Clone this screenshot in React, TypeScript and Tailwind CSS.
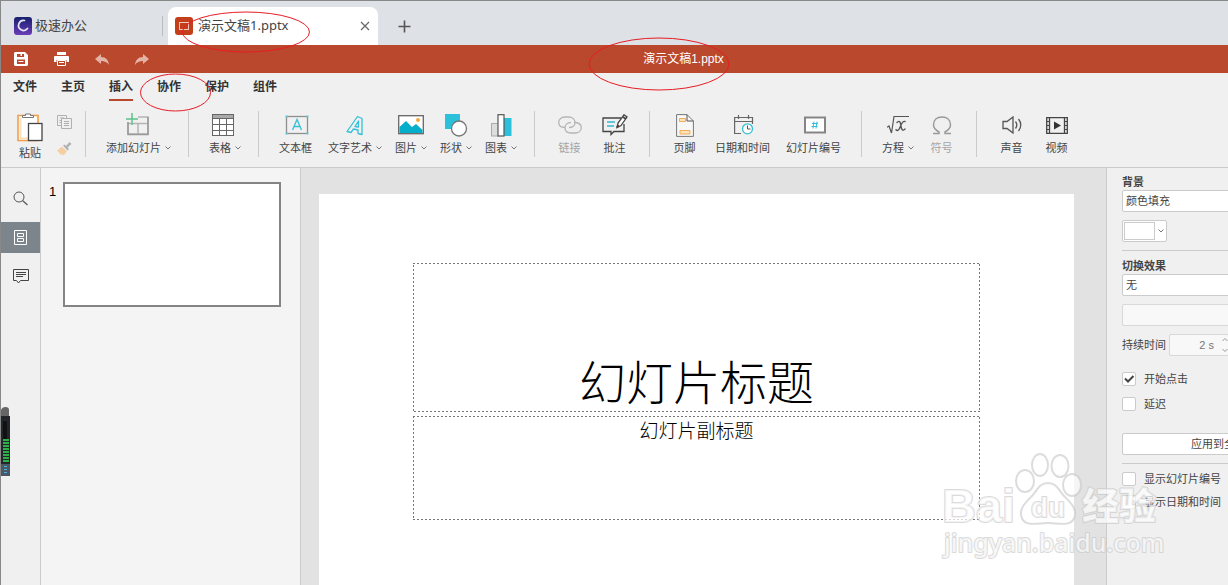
import { useState } from 'react';
import type { ReactNode } from 'react';

const menuTabs = ['文件', '主页', '插入', '协作', '保护', '组件'];

function Chevron() {
  return (
    <svg width="6" height="4" viewBox="0 0 6 4" fill="none" stroke="#777">
      <path d="M0.5 0.5L3 3L5.5 0.5" />
    </svg>
  );
}

function Tool({ label, menu, disabled, children }: { label: string; menu?: boolean; disabled?: boolean; children: ReactNode }) {
  return (
    <button disabled={disabled} className={`flex flex-col items-center shrink-0 ${menu ? 'pl-2 pr-[5px]' : 'px-2 min-w-[45px]'}`}>
      <span className="h-7 flex items-center">{children}</span>
      <span className={`h-[18px] flex items-center gap-1 text-[11px] whitespace-nowrap ${disabled ? 'text-[#a5a5a5]' : 'text-[#444]'}`}>
        {label}
        {menu && <Chevron />}
      </span>
    </button>
  );
}

function Group({ children }: { children: ReactNode }) {
  return <div className="flex shrink-0 h-[46px] px-3 border-l border-[#cbcbcb]">{children}</div>;
}

function Toolbar() {
  return (
    <div className="h-[65px] pt-[9px] flex items-start overflow-hidden">
      <div className="flex gap-3.5 pl-4 pr-3 shrink-0">
        <button className="flex flex-col items-center gap-0.5 pt-0.5 w-[26px]">
          <svg width="26" height="30" viewBox="0 0 26 30" fill="none">
            <rect x="1" y="2.5" width="20" height="25" fill="#fff" stroke="#f0a04b" strokeWidth="1.6" />
            <path d="M3.5 5v20.5h8" stroke="#fce0bd" strokeWidth="2" />
            <path d="M5.5 4.5v-2h3v-1.500h5v1.500h3v2z" fill="#fff" stroke="#777" />
            <rect x="11.500" y="10.500" width="13.500" height="17" fill="#fff" stroke="#444" strokeWidth="1.300" />
          </svg>
          <span className="h-[16px] flex items-center text-[11px] text-[#444] whitespace-nowrap">粘贴</span>
        </button>
        <div className="flex flex-col gap-3 pt-1 w-4">
          <button aria-label="复制">
            <svg width="16" height="15" viewBox="0 0 16 15" fill="#f0f0f0" stroke="#b0b0b0">
              <path d="M0.5 0.500h9v10h-9z" />
              <path d="M3 3h4M2.500 5.500h2M2.500 7.500h2" />
              <path d="M4.500 3.500h10v10h-10z" />
              <path d="M7 6.500h5M7 8.500h5M7 10.500h5" />
            </svg>
          </button>
          <button aria-label="格式刷">
            <svg width="15" height="14" viewBox="0 0 15 14">
              <path d="M0 8.500L5 4.500L10 9.500L6.500 13.500L5 12L4 13z" fill="#f5cfa4" />
              <path d="M6 3.500L7.500 2.500L9 4L12.500 0L14.500 2L10.500 5.500L12 7L10.500 8.500z" fill="#b0b0b0" />
            </svg>
          </button>
        </div>
      </div>

      <Group>
        <Tool label="添加幻灯片" menu>
          <svg width="24" height="24" viewBox="0 0 24 24" fill="none" className="mr-0.5">
            <path d="M2 9v12h20V4H12M2 10.500h20M12 10.500V21" stroke="#b4b4b4" strokeWidth="1.500" />
            <path d="M2 9v12.500h20V4" stroke="#999" strokeWidth="1.500" />
            <path d="M6 0v12M0 6h12" stroke="#5cc28c" strokeWidth="1.500" />
          </svg>
        </Tool>
      </Group>

      <Group>
        <Tool label="表格" menu>
          <svg width="23" height="22" viewBox="0 0 23 22" fill="none" className="mr-1">
            <rect x="0.500" y="0.500" width="21" height="21" fill="#fff" stroke="#666" />
            <path d="M1 1h20v3H1z" fill="#aaa" />
            <path d="M0.500 4.500h21M0.500 10.500h21M0.500 16.500h21M7.500 4.500v17M14.500 4.500v17" stroke="#666" />
          </svg>
        </Tool>
      </Group>

      <Group>
        <Tool label="文本框">
          <svg width="24" height="20" viewBox="0 0 24 20" fill="none" className="ml-0.5">
            <rect x="1.500" y="1.500" width="21" height="17" stroke="#8f8f8f" strokeWidth="1.300" />
            <path d="M7.500 15L12 4.500L16.500 15M9 11.500h6" stroke="#35c0d8" strokeWidth="1.300" />
            <path d="M0.500 0.500h2v2h-2zM21.500 0.500h2v2h-2zM0.500 17.500h2v2h-2zM21.500 17.500h2v2h-2z" fill="#65cbdc" />
          </svg>
        </Tool>
        <Tool label="文字艺术" menu>
          <svg width="18" height="21" viewBox="0 0 18 21" fill="none" stroke="#35c0d8" strokeWidth="1.300" strokeLinejoin="round">
            <path d="M1 16.500L11.500 1.500L16 3.500V19.500L12 18.500V15L7.500 14L5 17.500z" />
            <path d="M9 11.500L12.500 6V12z" />
          </svg>
        </Tool>
        <Tool label="图片" menu>
          <svg width="26" height="20" viewBox="0 0 26 20">
            <rect x="0.700" y="0.700" width="24.600" height="18" fill="#fff" stroke="#666" strokeWidth="1.300" />
            <path d="M1.500 18V12L8 6L14 12L18 9L24.500 15V18z" fill="#05aecb" />
            <circle cx="20" cy="5" r="2" fill="#f4a83e" />
          </svg>
        </Tool>
        <Tool label="形状" menu>
          <svg width="23" height="23" viewBox="0 0 23 23">
            <path d="M0 0h15v15H0z" fill="#2bc1da" />
            <circle cx="14" cy="14.500" r="7.500" fill="#fff" stroke="#777" strokeWidth="1.300" />
          </svg>
        </Tool>
        <Tool label="图表" menu>
          <svg width="21" height="23" viewBox="0 0 21 23">
            <rect x="0.500" y="9.500" width="7" height="12.500" fill="#ddd" stroke="#aaa" />
            <path d="M13 4h7.500v18H13z" fill="#2bc1da" />
            <rect x="7" y="0.700" width="6" height="21.300" fill="#fff" stroke="#555" strokeWidth="1.200" />
          </svg>
        </Tool>
      </Group>

      <Group>
        <Tool label="链接" disabled>
          <svg width="24" height="18" viewBox="0 0 24 18" fill="none" stroke="#b5b5b5" strokeWidth="1.300">
            <path d="M7 11.500C3 11.500 0.700 9.500 0.700 6.500C0.700 3 3.500 1 7 1h3.500c3.500 0 6.500 2 6.500 5.500c0 3-2.500 5-6 5" />
            <path d="M16 6.500c4.500 0 7.300 2 7.300 5.200c0 3.300-2.800 5.300-6.300 5.300h-4c-3.500 0-6-2-6-5.300c0-3 2.500-5.200 6-5.200" />
          </svg>
        </Tool>
        <Tool label="批注">
          <svg width="26" height="22" viewBox="0 0 26 22" fill="none" stroke="#444" strokeWidth="1.300">
            <path d="M19 4H1v13.500h8v3l3-3h10V10" />
            <path d="M5 8h8M5 12h7" stroke="#35b8d0" />
            <path d="M15 13.500L16 9L22 0.800L25 3L19 11.500z" fill="#fff" />
            <path d="M15 13.500L16.500 11M21 3l3 2" strokeWidth="2" />
          </svg>
        </Tool>
      </Group>

      <Group>
        <Tool label="页脚">
          <svg width="18" height="23" viewBox="0 0 18 23" fill="none">
            <path d="M0.600 0.600H11L17.400 7V22.400H0.600z" fill="#f7f7f7" stroke="#777" />
            <path d="M11 0.600V7h6.400" stroke="#555" />
            <path d="M3.500 4.500h6v3h-6zM4 16.500h10v3.500H4z" fill="#fde2bc" stroke="#f2ab58" />
          </svg>
        </Tool>
        <Tool label="日期和时间">
          <svg width="20" height="20" viewBox="0 0 20 20" fill="none" className="ml-0.5">
            <path d="M7 18.500H0.600V2.500H18.500V9M0.600 6.500h18M4.500 0v4M14.500 0v4" stroke="#666" strokeWidth="1.200" />
            <circle cx="13.500" cy="13.800" r="5" fill="#fff" stroke="#35c0d8" strokeWidth="1.300" />
            <path d="M13.500 10.500v3.500h3" stroke="#555" />
          </svg>
        </Tool>
        <Tool label="幻灯片编号">
          <svg width="22" height="18" viewBox="0 0 22 18" fill="none" className="ml-0.5">
            <rect x="1" y="1.500" width="20" height="15" fill="#fff" stroke="#858585" strokeWidth="2" />
            <path d="M10 5.500L9 12.500M13 5.500L12 12.500M8 7.500h6M7.500 10.500h6" stroke="#35c0d8" />
          </svg>
        </Tool>
      </Group>

      <Group>
        <Tool label="方程" menu>
          <svg width="22" height="20" viewBox="0 0 22 20" fill="none" stroke="#555" strokeWidth="1.200" strokeLinecap="round">
            <path d="M0.500 12L2 11L4.500 18L7 1.500H21.500" />
            <path d="M10 7.500C13 4.500 13.500 8 14 11C14.500 14.500 15.500 16.500 18 14M18 6.500C15 5.500 14 10.500 12.500 13.500C11.500 15.500 10 16 9 14.800" strokeWidth="1.400" />
          </svg>
        </Tool>
        <Tool label="符号" disabled>
          <svg width="20" height="19" viewBox="0 0 20 19" fill="none" stroke="#999" strokeWidth="1.500">
            <path d="M1 17.500H7V16C3.500 14 1.500 12 1.500 9C1.500 4 5 1 10 1C15 1 18.500 4 18.500 9C18.500 12 16.500 14 13 16V17.500H19" />
          </svg>
        </Tool>
      </Group>

      <Group>
        <Tool label="声音">
          <svg width="20" height="18" viewBox="0 0 20 18" fill="none" stroke="#555" strokeWidth="1.300">
            <path d="M1 5.500H5L11 1V17L5 12.500H1z" />
            <path d="M13.500 5.500C15 7.500 15 10.500 13.500 12.500M16.500 3C19.500 6.500 19.500 11.500 16.500 15" />
          </svg>
        </Tool>
        <Tool label="视频">
          <svg width="22" height="17" viewBox="0 0 22 17" fill="none" stroke="#444">
            <path d="M0.700 0.700H21.300V16.300H0.700zM3.500 1v15M18.500 1v15" strokeWidth="1.300" />
            <path d="M1 4.500h2.500M1 8.500h2.500M1 12.500h2.500M18.500 4.500H21M18.500 8.500H21M18.500 12.500H21" />
            <path d="M8 4.500L15 8.500L8 12.500z" fill="#333" stroke="none" />
          </svg>
        </Tool>
      </Group>
    </div>
  );
}

function SideRail() {
  return (
    <div className="w-10 shrink-0 border-r border-[#cbcbcb] pt-[15px] flex flex-col gap-2">
      <button aria-label="搜索" className="h-[31px] flex items-center justify-center">
        <svg width="15" height="15" viewBox="0 0 15 15" fill="none" stroke="#555">
          <circle cx="6" cy="6" r="5" />
          <path d="M9.500 9.500L14.500 14" strokeWidth="1.200" />
        </svg>
      </button>
      <button aria-label="幻灯片" className="h-[31px] flex items-center justify-center bg-[#7d858c]">
        <svg width="13" height="15" viewBox="0 0 13 15" fill="none" stroke="#fff">
          <path d="M0.500 0.500h12v14h-12zM3.500 3.500h6v3h-6zM3.500 8.500h6v3h-6z" />
        </svg>
      </button>
      <button aria-label="批注" className="h-[31px] flex items-center justify-center">
        <svg width="16" height="15" viewBox="0 0 16 15" fill="none" stroke="#444">
          <path d="M0.500 0.500h15v11H7.500L5.500 14L3.500 11.500h-3zM3 3.500h10M3 5.500h10M3 7.500h7" />
        </svg>
      </button>
    </div>
  );
}

function Outline() {
  return (
    <svg width="100%" height="100%" className="absolute inset-0 pointer-events-none" fill="none">
      <rect width="100%" height="100%" stroke="#777" strokeWidth="2" strokeDasharray="2 2" />
    </svg>
  );
}

function Check({ label, defaultChecked }: { label: string; defaultChecked?: boolean }) {
  return (
    <label className="flex items-center gap-2 h-4 text-[11px] whitespace-nowrap">
      <span className="relative flex">
        <input type="checkbox" defaultChecked={defaultChecked} className="peer appearance-none w-3.5 h-3.5 bg-white border border-[#cbcbcb] rounded-xs" />
        <svg viewBox="0 0 14 14" className="absolute inset-0 w-3.5 h-3.5 hidden peer-checked:block pointer-events-none" fill="none" stroke="#444" strokeWidth="2">
          <path d="M3 6.500L6 9.500L11.500 4" />
        </svg>
      </span>
      {label}
    </label>
  );
}

function SettingsPanel() {
  return (
    <aside className="w-[122px] shrink-0 overflow-hidden border-l border-[#cbcbcb] pl-[15px] pt-1.5 text-[11px] text-[#444]">
      <div className="w-[228px] flex flex-col">
        <label htmlFor="fill" className="h-4 leading-4 font-bold">背景</label>
        <select id="fill" className="appearance-none h-[22px] px-[3px] bg-white border border-[#cbcbcb] rounded-xs">
          <option>颜色填充</option>
        </select>
        <button aria-label="填充颜色" className="mt-2 w-[45px] h-[22px] p-px flex items-center gap-[3px] bg-white border border-[#cbcbcb] rounded-xs">
          <span className="w-[31px] h-[18px] border border-[#cbcbcb]" />
          <Chevron />
        </button>
        <hr className="mt-2 border-[#cbcbcb]" />
        <label htmlFor="effect" className="mt-[7px] h-4 leading-4 font-bold">切换效果</label>
        <select id="effect" className="appearance-none h-[22px] px-[3px] bg-white border border-[#cbcbcb] rounded-xs">
          <option>无</option>
        </select>
        <select disabled aria-label="效果选项" className="appearance-none mt-2 h-[22px] bg-[#f8f8f8] border border-[#d8d8d8] rounded-xs" />
        <div className="mt-2 h-[22px] flex items-center gap-[3px]">
          <label htmlFor="duration">持续时间</label>
          <span className="w-[60px] h-[22px] flex items-center bg-[#f8f8f8] border border-[#d8d8d8] rounded-xs">
            <input id="duration" disabled defaultValue="2 s" className="w-11 text-right text-[#777]" />
            <svg width="6" height="16" viewBox="0 0 6 16" fill="none" stroke="#999" className="ml-2">
              <path d="M0.500 4L3 1.500L5.500 4M0.500 12L3 14.500L5.500 12" />
            </svg>
          </span>
        </div>
        <div className="mt-[15px] flex flex-col gap-[9px]">
          <Check label="开始点击" defaultChecked />
          <Check label="延迟" />
        </div>
        <button className="mt-[21px] h-[22px] pl-[68px] text-left bg-white border border-[#cbcbcb] rounded-xs">应用到全部幻灯片</button>
        <hr className="mt-2 border-[#cbcbcb]" />
        <div className="mt-[7px] flex flex-col gap-[7px]">
          <Check label="显示幻灯片编号" />
          <Check label="显示日期和时间" />
        </div>
      </div>
    </aside>
  );
}

function Watermark() {
  return (
    <svg width="240" height="120" viewBox="0 0 240 120" className="absolute left-[930px] top-[445px] pointer-events-none" fill="#fff" fillOpacity="0.7" stroke="#c4c4c4" strokeOpacity="0.6" strokeWidth="2" strokeLinejoin="round">
      <text x="11" y="76" paintOrder="stroke" className="text-[47px] font-bold font-['Liberation_Sans',sans-serif]">Bai</text>
      <ellipse cx="94" cy="35" rx="9" ry="11" />
      <ellipse cx="109" cy="19" rx="8" ry="11" />
      <ellipse cx="129" cy="20" rx="8.500" ry="11" />
      <ellipse cx="141" cy="39" rx="9" ry="11" />
      <path d="M117 37C108 37 106 45 101 50C96 55 89 61 90 69C92 82 106 77 117 77C128 77 142 82 144 69C145 61 138 55 133 50C128 45 126 37 117 37z" />
      <text x="100" y="71" paintOrder="stroke" className="text-[28px] font-bold font-['Liberation_Sans',sans-serif]">du</text>
      <text x="151" y="74" paintOrder="stroke" className="text-[37px] font-black font-['Noto_Sans_CJK_SC',sans-serif]">经验</text>
      <text x="13" y="106" paintOrder="stroke" className="text-[25px] font-medium font-['Noto_Sans',sans-serif]">jingyan.baidu.com</text>
    </svg>
  );
}

export default function App() {
  const [active, setActive] = useState('插入');

  return (
    <div className="relative min-h-screen overflow-hidden flex flex-col bg-[#f0f0f0] border-l border-t border-[#888] text-[#333] font-['Liberation_Sans','Noto_Sans_CJK_SC',sans-serif]">
      <header className="h-11 shrink-0 flex items-end bg-[#dee1e6] text-[13px] text-[#444] font-['Noto_Sans','Noto_Sans_CJK_SC',sans-serif]">
        <div className="w-[162px] h-[38px] pl-[13px] flex items-center gap-[3px] shrink-0">
          <svg width="18" height="18" viewBox="0 0 18 18">
            <defs>
              <linearGradient id="brand" x1="0" y1="0" x2="0" y2="1">
                <stop offset="0" stopColor="#16206e" />
                <stop offset="1" stopColor="#6a3db8" />
              </linearGradient>
            </defs>
            <rect width="18" height="18" rx="3" fill="url(#brand)" />
            <path d="M10.500 3.500A5 5 0 1 0 13.500 11.500" fill="none" stroke="#e6e4f5" strokeWidth="1.700" strokeLinecap="round" />
          </svg>
          <span>极速办公</span>
          <span className="ml-auto w-px h-5 bg-[#b9bcc1]" />
        </div>
        <div className="ml-[5px] w-[210px] h-[38px] pl-[7px] pr-2 flex items-center gap-[5px] shrink-0 bg-white rounded-t-lg">
          <svg width="18" height="18" viewBox="0 0 18 18" fill="none">
            <rect width="18" height="18" rx="3" fill="#c43e1c" />
            <rect x="4.500" y="5.500" width="9" height="7" stroke="#f0c8b8" />
          </svg>
          <span>演示文稿1.pptx</span>
          <button aria-label="关闭" className="ml-auto">
            <svg width="10" height="10" viewBox="0 0 10 10" stroke="#666" strokeWidth="1.200">
              <path d="M1 1L9 9M9 1L1 9" />
            </svg>
          </button>
        </div>
        <button aria-label="新建" className="ml-5 h-[38px] flex items-center">
          <svg width="13" height="13" viewBox="0 0 13 13" stroke="#555" strokeWidth="1.600">
            <path d="M6.500 0.500v12M0.500 6.500h12" />
          </svg>
        </button>
      </header>

      <div className="h-7 shrink-0 flex items-center bg-[#b9482c] text-white">
        <div className="flex gap-[26px] pl-[13px] w-[150px] shrink-0">
          <button aria-label="保存">
            <svg width="14" height="14" viewBox="0 0 14 14">
              <path fillRule="evenodd" d="M1 0h10l3 3v10l-1 1H1l-1-1V1zM3 2v3h7V2H8v2H6.500V2zM3 7.500V12h8V7.500zM4.500 9h5v1h-5z" fill="#fff" />
            </svg>
          </button>
          <button aria-label="打印">
            <svg width="15" height="14" viewBox="0 0 15 14">
              <path d="M3 0h9v3H3zM1 4h13q1 0 1 1v5h-2.500V8h-10v2H0V5q0-1 1-1z" fill="#fff" />
              <path d="M3.500 8.500h8v5h-8zM5 10.500h5" fill="none" stroke="#fff" />
            </svg>
          </button>
          <button aria-label="撤销">
            <svg width="14" height="11" viewBox="0 0 14 11" fill="#e5b3a5">
              <path d="M6 0V3C11 3 13.500 6 14 11C12 8 9.500 7 6 7V10L0 5z" />
            </svg>
          </button>
          <button aria-label="重做">
            <svg width="14" height="11" viewBox="0 0 14 11" fill="#e5b3a5">
              <path d="M8 0V3C3 3 0.500 6 0 11C2 8 4.500 7 8 7V10L14 5z" />
            </svg>
          </button>
        </div>
        <h1 className="flex-1 text-center text-[12px] leading-4 pr-3">演示文稿1.pptx</h1>
      </div>

      <nav className="h-[29px] shrink-0 flex gap-6 pl-3">
        {menuTabs.map((tab) => (
          <button key={tab} onClick={() => setActive(tab)} className={`h-7 pt-0.5 text-[12px] font-bold border-b-2 ${tab === active ? 'border-[#b9482c]' : 'border-transparent'}`}>
            {tab}
          </button>
        ))}
      </nav>

      <Toolbar />

      <main className="flex-1 flex border-t border-[#cbcbcb]">
        <SideRail />
        <section className="w-[260px] shrink-0 pl-2 pt-3.5 flex items-start gap-[7px] bg-[#f4f4f4] border-r border-[#cbcbcb]">
          <span className="w-[7px] text-[13px] leading-5 text-black">1</span>
          <button aria-label="幻灯片 1" className="w-[218px] h-[125px] bg-white border-2 border-[#848484]" />
        </section>
        <section className="flex-1 min-w-0 pl-[18px] pr-8 pt-[26px] flex bg-[#e2e2e2]">
          <div className="flex-1 bg-white px-[94px] pt-[69px] flex flex-col gap-1 text-black text-center font-['Noto_Sans_CJK_SC',sans-serif]">
            <h2 className="relative h-[149px] pb-1 flex items-end justify-center text-[47px] leading-[56px] font-light">
              幻灯片标题
              <Outline />
            </h2>
            <p className="relative h-[104px] text-[19px] leading-7 font-light">
              幻灯片副标题
              <Outline />
            </p>
          </div>
        </section>
        <SettingsPanel />
      </main>

      {/* battery style pen widget docked to the left edge */}
      <svg width="9" height="70" viewBox="0 0 9 70" className="absolute left-0 top-[406px]">
        <path d="M0 9V3Q1 0 4.500 0Q8 0 8 3V9z" fill="#666" />
        <path d="M0 9h9v48H0z" fill="#22252a" />
        <path d="M0 57h9v12H0z" fill="#4a5866" />
        <path d="M2 14h4v18H2z" fill="#111" />
        <path d="M2 33h6M2 36h6M2 39h6M2 42h6M2 45h6M2 48h6M2 51h6M2 54h6" stroke="#2fe052" strokeWidth="1.500" />
        <path d="M3 59.500h3M3 62.500h3M3 65.500h3" stroke="#4ab4e0" />
      </svg>

      {/* red annotation rings */}
      <svg width="740" height="120" viewBox="0 0 740 120" className="absolute left-0 top-0 pointer-events-none" fill="none" stroke="#e81c24">
        <ellipse cx="245" cy="31" rx="63.500" ry="20" />
        <ellipse cx="658" cy="63" rx="70" ry="26" />
        <ellipse cx="174.500" cy="91.500" rx="35" ry="18.500" />
      </svg>

      <Watermark />
    </div>
  );
}
